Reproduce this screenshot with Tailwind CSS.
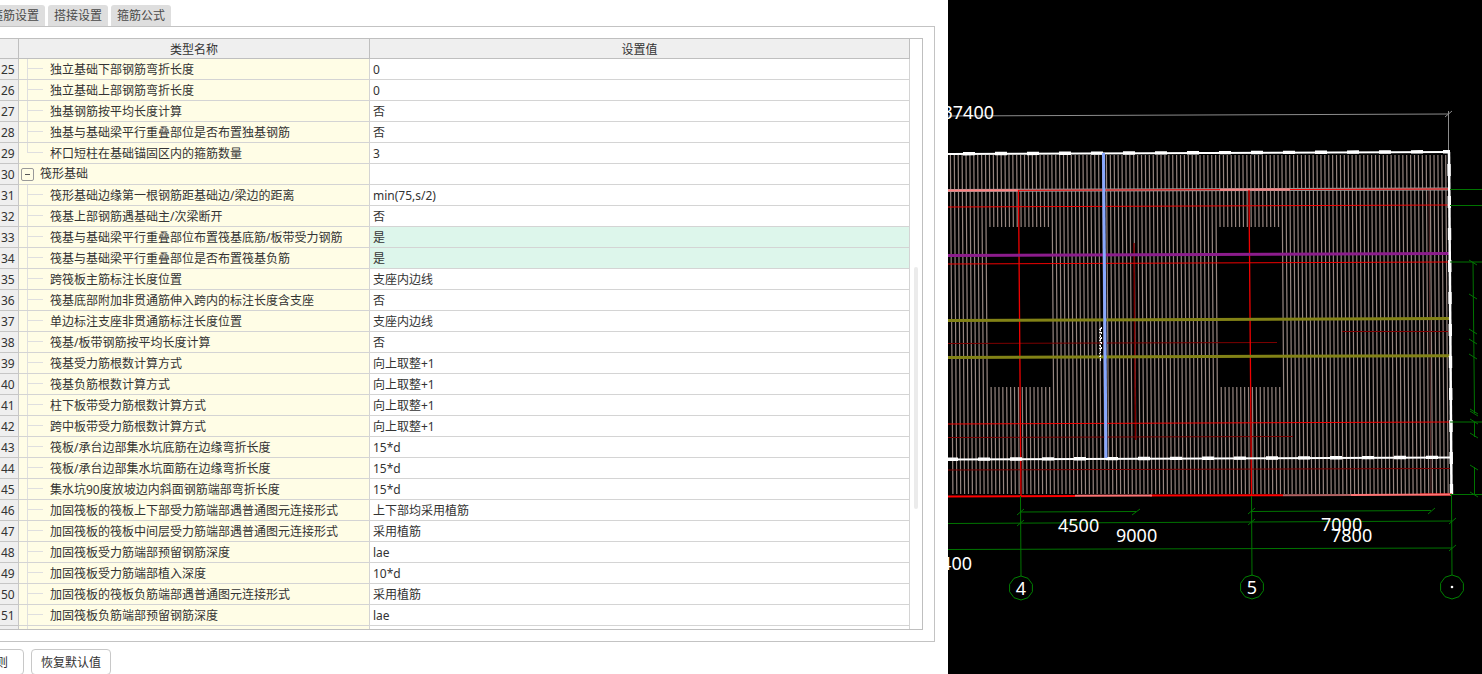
<!DOCTYPE html>
<html lang="zh-CN">
<head>
  <meta charset="UTF-8">
  <title>计算设置</title>
  <meta name="viewport" content="width=device-width, initial-scale=1.0">
  <script src="https://cdn.jsdelivr.net/npm/@tailwindcss/browser@4"></script>
</head>
<body class="flex min-h-screen overflow-hidden bg-white font-['Noto_Sans','Noto_Sans_CJK_SC',sans-serif] text-[12px] text-[#333]">

  <!-- settings dialog -->
  <main class="min-w-0 flex-1 overflow-hidden pt-[5px]">
    <nav class="-ml-[15px] flex gap-[3px] text-[#4a4a4a]">
      <button class="h-[21px] rounded-t-[3px] bg-[#dedede] px-[6px] leading-[20px]">箍筋设置</button>
      <button class="h-[21px] rounded-t-[3px] bg-[#dedede] px-[6px] leading-[20px]">搭接设置</button>
      <button class="h-[21px] rounded-t-[3px] bg-[#dedede] px-[6px] leading-[20px]">箍筋公式</button>
    </nav>

    <section class="mr-[13px] border-y border-r border-[#c3c3c3] py-[11px] pr-[11px]">
      <div class="flex h-[592px] overflow-hidden border-y border-r border-[#bfbfbf]">
        <table class="h-fit flex-1 table-fixed border-separate border-spacing-0">
          <colgroup>
            <col class="w-[19px]">
            <col class="w-[351px]">
            <col>
          </colgroup>
          <thead>
            <tr class="h-[20px] bg-[#efefef] leading-[17px]">
              <th class="border-r border-b border-[#bfbfbf] p-0"></th>
              <th class="border-r border-b border-[#bfbfbf] p-0 pt-[2px] font-normal">类型名称</th>
              <th class="border-r border-b border-[#bfbfbf] p-0 pt-[2px] font-normal">设置值</th>
            </tr>
          </thead>
          <tbody id="rows"></tbody>
        </table>
        <div class="w-[12px] shrink-0 pt-[228px] pl-[4px]">
          <div class="h-[242px] w-[4px] rounded-full bg-[#ebebeb]"></div>
        </div>
      </div>
    </section>

    <footer class="mt-[7px] -ml-[20px] flex gap-[7px]">
      <button class="h-[26px] rounded-[4px] border border-[#c8c8c8] px-[15px] pt-[2px]">则</button>
      <button class="h-[26px] rounded-[4px] border border-[#c8c8c8] px-[9px] pt-[2px]">恢复默认值</button>
    </footer>
  </main>

  <!-- drawing view -->
  <aside class="w-[534px] shrink-0 bg-black">
    <svg class="block h-[674px] w-[534px]" viewBox="948 0 534 674" fill="none">
      <!-- overall dimension -->
      <g stroke="#8c8c8c">
        <path d="M948 116 L1449 114 M1448.5 111V153 M1445 117L1452 111"/>
      </g>

      <!-- rebar hatch, filled in below -->
      <g id="hatch" stroke="#968680" stroke-width="1.200"></g>

      <!-- faint axes -->
      <g stroke="#7c0000">
        <path d="M948 343.500L1277 342.500 M1342 331.500L1449 331.500 M948 437.500L1293 436.500 M948 470L1450 468.500"/>
        <path d="M1134 243L1135.500 440" stroke-width="1.500"/>
        <path d="M1429 190L1431 495" stroke="#804040" opacity=".7"/>
      </g>

      <!-- axes -->
      <path d="M948 190.500L1449 189" stroke="#999" stroke-width="3"/>
      <path d="M948 190.500L1018 190.300 M1220 189.700L1290 189.500" stroke="#ff8080" stroke-width="2"/>
      <g stroke="#f00000">
        <path d="M1018 190.300L1220 189.700 M1290 189.500L1449 189" stroke="#f00"/>
        <path d="M948 207L1449 205 M948 264L1449 262 M948 424L1450 422"/>
        <path d="M1018.500 190L1021 496 M1249 190L1251.500 496" stroke-width="1.300"/>
      </g>

      <!-- bands -->
      <path d="M948 255.500L1449 253.500" stroke="#8c1c8c" stroke-width="3"/>
      <path d="M948 320.500L1450 318.500 M948 357.500L1450 355.700" stroke="#828216" stroke-width="3"/>

      <!-- slab outline -->
      <g stroke="#fff">
        <path d="M948 154L1450 152 M948 459.500L1452 457.500" stroke-width="2"/>
        <path d="M1449 152L1451.500 495" stroke-width="2.500"/>
        <g stroke-width="3.400" stroke-dasharray="12 20">
          <path d="M963 153.700L1450 151.700"/>
          <path d="M946 459.300L1452 457.300"/>
          <path d="M1449 164L1451.500 495"/>
        </g>
      </g>
      <path d="M948 496.500L1075 496 M1150 495.500L1283 495.300 M1420 494.600L1452 494.500" stroke="#f00" stroke-width="2"/>
      <path d="M1075 495.700L1152 495.500 M1350 494.900L1452 494.500" stroke="#ff7474" stroke-width="2"/>
      <path d="M1283 495.300L1351 494.900" stroke="#b06060" stroke-width="2"/>

      <!-- selected wall and its tag -->
      <path d="M1103.500 153L1106 458" stroke="#88a8ff" stroke-width="3"/>
      <path d="M1100.500 328V361" stroke="#fff" stroke-dasharray="3 1 1 2 2 1"/>
      <path d="M1099.500 329V361" stroke="#ddd" stroke-dasharray="1 2 1 4"/>
      <path d="M1101.500 327V350" stroke="#fff" stroke-dasharray="2 3"/>

      <!-- dimension chains -->
      <g stroke="#007400">
        <path d="M1450 189.500H1482 M1450 205.500H1482 M1450 262H1482 M1450 422H1482 M1450 494.500H1482"/>
        <path d="M1473 262L1474.500 413 M1474.500 422V437 M1474.500 467V495"/>
        <path d="M1469 260L1477 265 M1469 294L1477 299 M1469 329L1477 334 M1469 339L1477 344 M1469 354L1477 359 M1470 409L1478 414 M1470 411L1478 416 M1470 419L1478 424 M1470 433L1478 438 M1470 465L1478 470 M1470 492L1478 497"/>
        <path d="M1020.500 496L1021 576 M1251.500 496L1252 576 M1451.500 495L1452 575"/>
        <path d="M1020 512L1136 511.500 M1251 511.500L1431 510.500 M948 523.500L1452 521 M948 549.500L1452 548"/>
        <path d="M1017 515L1024 509 M1132 515L1140 509 M1017 526L1024 520 M1248 514L1255 508 M1428 514L1435 508 M1248 525L1255 519 M1449 524L1456 518 M1449 551L1456 545"/>
      </g>

      <!-- axis bubbles -->
      <g stroke="#008000">
        <path transform="translate(1021 588)" d="M0-12L7-9.700L11.400-3.700V3.700L7 9.700L0 12L-7 9.700L-11.400 3.700V-3.700L-7-9.700Z"/>
        <path transform="translate(1252 587)" d="M0-12L7-9.700L11.400-3.700V3.700L7 9.700L0 12L-7 9.700L-11.400 3.700V-3.700L-7-9.700Z"/>
        <path transform="translate(1452 587)" d="M0-12L7-9.700L11.400-3.700V3.700L7 9.700L0 12L-7 9.700L-11.400 3.700V-3.700L-7-9.700Z"/>
      </g>
      <circle cx="1452" cy="587" r="1.300" fill="#fff"/>

      <g class="text-[18px]" fill="#fff">
        <text x="994" y="119" text-anchor="end">37400</text>
        <text x="1058" y="532">4500</text>
        <text x="1116" y="542">9000</text>
        <text x="1321" y="531">7000</text>
        <text x="1331" y="542">7800</text>
        <text x="972" y="570" text-anchor="end">400</text>
        <text x="1021" y="595" text-anchor="middle">4</text>
        <text x="1252" y="594" text-anchor="middle">5</text>
      </g>
    </svg>
  </aside>

  <script>
    // [no, name, value]
    const rows = [
      [25, '独立基础下部钢筋弯折长度', '0'],
      [26, '独立基础上部钢筋弯折长度', '0'],
      [27, '独基钢筋按平均长度计算', '否'],
      [28, '独基与基础梁平行重叠部位是否布置独基钢筋', '否'],
      [29, '杯口短柱在基础锚固区内的箍筋数量', '3'],
      [30, '筏形基础', ''],
      [31, '筏形基础边缘第一根钢筋距基础边/梁边的距离', 'min(75,s/2)'],
      [32, '筏基上部钢筋遇基础主/次梁断开', '否'],
      [33, '筏基与基础梁平行重叠部位布置筏基底筋/板带受力钢筋', '是'],
      [34, '筏基与基础梁平行重叠部位是否布置筏基负筋', '是'],
      [35, '跨筏板主筋标注长度位置', '支座内边线'],
      [36, '筏基底部附加非贯通筋伸入跨内的标注长度含支座', '否'],
      [37, '单边标注支座非贯通筋标注长度位置', '支座内边线'],
      [38, '筏基/板带钢筋按平均长度计算', '否'],
      [39, '筏基受力筋根数计算方式', '向上取整+1'],
      [40, '筏基负筋根数计算方式', '向上取整+1'],
      [41, '柱下板带受力筋根数计算方式', '向上取整+1'],
      [42, '跨中板带受力筋根数计算方式', '向上取整+1'],
      [43, '筏板/承台边部集水坑底筋在边缘弯折长度', '15*d'],
      [44, '筏板/承台边部集水坑面筋在边缘弯折长度', '15*d'],
      [45, '集水坑90度放坡边内斜面钢筋端部弯折长度', '15*d'],
      [46, '加固筏板的筏板上下部受力筋端部遇普通图元连接形式', '上下部均采用植筋'],
      [47, '加固筏板的筏板中间层受力筋端部遇普通图元连接形式', '采用植筋'],
      [48, '加固筏板受力筋端部预留钢筋深度', 'lae'],
      [49, '加固筏板受力筋端部植入深度', '10*d'],
      [50, '加固筏板的筏板负筋端部遇普通图元连接形式', '采用植筋'],
      [51, '加固筏板负筋端部预留钢筋深度', 'lae'],
      ['', '', '']
    ];

    document.getElementById('rows').innerHTML = rows.map(([no, name, value]) => {
      const group = no === 30;
      const last = no === 29;
      const changed = no === 33 || no === 34;
      const label = group
        ? `<div class="flex h-[20px] items-center gap-[6px] pl-[2px]">
             <button class="flex size-[13px] items-center justify-center rounded-[2px] border border-[#999]" aria-label="折叠"><span class="h-px w-[5px] bg-[#555]"></span></button>${name}
           </div>`
        : `<div class="flex h-[20px] pl-[8px]">
             <span class="w-px bg-[#dfdfdf] ${last ? 'h-[10px]' : 'h-full'}"></span>
             <span class="mt-[9px] mr-[7px] h-px w-[15px] ${no ? 'bg-[#dfdfdf]' : ''}"></span>${name}
           </div>`;
      return `<tr class="h-[21px] leading-[18px]">
        <td class="border-r border-b border-[#c6c6c6] bg-[#efefef] p-0 pt-[2px] pl-px">${no}</td>
        <td class="border-r border-b border-[#d4d4d4] bg-[#fffde6] p-0 leading-[22px] whitespace-nowrap"><div class="h-[20px]">${label}</div></td>
        <td class="border-r border-b border-[#d4d4d4] p-0 pt-[2px] pl-[3px] ${changed ? 'bg-[#ddf6eb]' : ''}">${value}</td>
      </tr>`;
    }).join('');

    // bars run the full slab height except across the two openings
    const lean = 2.5 / 340;
    const openings = [[987, 1050], [1217, 1281]];
    let d = '';
    function bar(x, y1, y2) {
      d += `M${x + (y1 - 154) * lean} ${y1}L${x + (y2 - 154) * lean} ${y2}`;
    }
    for (let x = 950.4; x < 1447; x += 3.9) {
      if (openings.some(([a, b]) => x > a && x < b)) {
        bar(x, 155, 227);
        bar(x, 387, 494);
      } else {
        bar(x, 155, 494);
      }
    }
    document.getElementById('hatch').innerHTML = `<path d="${d}"/>`;
  </script>
</body>
</html>
